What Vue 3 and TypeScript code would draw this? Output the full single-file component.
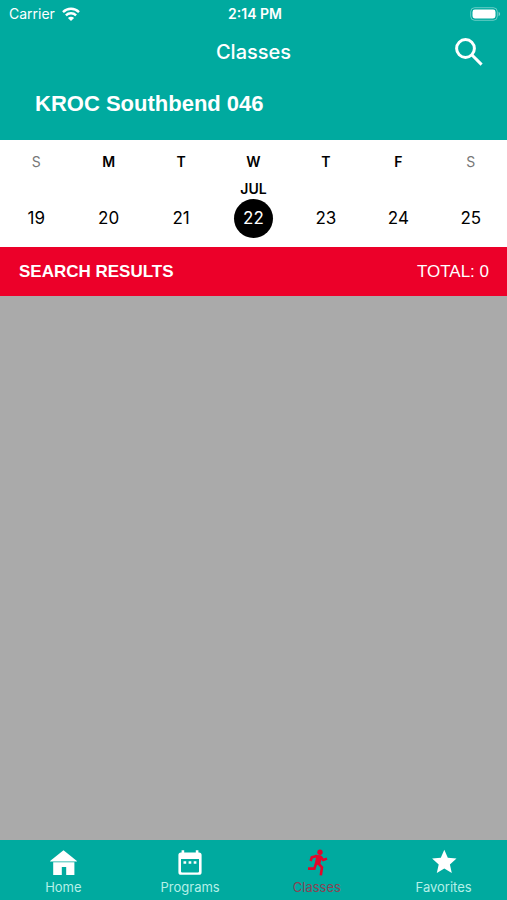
<script setup lang="ts">
import { ref } from 'vue'

interface Day {
  letter: string
  date: number
  weekend: boolean
}

interface Tab {
  label: string
  icon: 'home' | 'calendar' | 'run' | 'star'
}

const days: Day[] = [
  { letter: 'S', date: 19, weekend: true },
  { letter: 'M', date: 20, weekend: false },
  { letter: 'T', date: 21, weekend: false },
  { letter: 'W', date: 22, weekend: false },
  { letter: 'T', date: 23, weekend: false },
  { letter: 'F', date: 24, weekend: false },
  { letter: 'S', date: 25, weekend: true },
]

const tabs: Tab[] = [
  { label: 'Home', icon: 'home' },
  { label: 'Programs', icon: 'calendar' },
  { label: 'Classes', icon: 'run' },
  { label: 'Favorites', icon: 'star' },
]

const selectedDate = ref(22)
const activeTab = ref('Classes')
const total = ref(0)
</script>

<template>
  <div class="screen">
    <header class="header">
      <div class="status">
        <span class="carrier">
          Carrier
          <svg class="wifi" viewBox="0 0 18 14" aria-hidden="true">
            <path d="M1 5.1a11.4 11.4 0 0 1 16 0" />
            <path d="M3.9 8.4a7.2 7.2 0 0 1 10.2 0" />
            <path class="dot" d="M9 14 5.9 11a4.4 4.4 0 0 1 6.2 0z" />
          </svg>
        </span>
        <span class="clock">2:14 PM</span>
        <svg class="battery" viewBox="0 0 31 14" aria-hidden="true">
          <rect class="shell" x="0.7" y="0.7" width="26.6" height="12.6" rx="4" />
          <rect class="charge" x="2.5" y="2.5" width="23" height="9" rx="2.4" />
          <path class="cap" d="M28.6 4.8c2 .8 2 3.6 0 4.4z" />
        </svg>
      </div>
      <div class="nav">
        <h1 class="title">Classes</h1>
        <button class="search" type="button" aria-label="Search">
          <svg viewBox="0 0 28 28" aria-hidden="true">
            <circle cx="10.5" cy="10.5" r="8.9" />
            <path d="M17 17l9.6 9.6" />
          </svg>
        </button>
      </div>
      <h2 class="club">KROC Southbend 046</h2>
    </header>

    <section class="week">
      <button
        v-for="day in days"
        :key="day.date"
        type="button"
        class="day"
        @click="selectedDate = day.date"
      >
        <span class="letter" :class="{ weekend: day.weekend }">{{ day.letter }}</span>
        <span class="month">{{ day.date === selectedDate ? 'JUL' : '' }}</span>
        <span class="date" :class="{ selected: day.date === selectedDate }">{{ day.date }}</span>
      </button>
    </section>

    <div class="results">
      <h3 class="results-title">SEARCH RESULTS</h3>
      <span class="total">TOTAL: {{ total }}</span>
    </div>

    <main class="list"></main>

    <nav class="tabs">
      <a
        v-for="tab in tabs"
        :key="tab.label"
        href="#"
        class="tab"
        :class="{ active: tab.label === activeTab }"
        @click.prevent="activeTab = tab.label"
      >
        <svg v-if="tab.icon === 'home'" class="icon" viewBox="0 0 28 28" aria-hidden="true">
          <path d="M14.5 1.3 27.9 12v.6H1.1V12z" />
          <path d="M4.2 13.2h21.2V26h-8.2v-8h-4.4v8H4.2z" />
        </svg>
        <svg v-else-if="tab.icon === 'calendar'" class="icon" viewBox="0 0 28 28" aria-hidden="true">
          <path
            fill-rule="evenodd"
            d="M5.6 1.2h2.6v2.2h11.6V1.2h2.6v2.2h.6a2.6 2.6 0 0 1 2.6 2.6v17.2a2.6 2.6 0 0 1-2.6 2.6H5a2.6 2.6 0 0 1-2.6-2.6V6A2.6 2.6 0 0 1 5 3.4h.6zM5 10v12.6c0 .5.3.8.8.8h16.4c.5 0 .8-.3.8-.8V10z"
          />
          <path d="M7.5 12.2h2.7v2.6H7.5zM12.6 12.2h2.7v2.6h-2.7zM17.7 12.2h2.7v2.6h-2.7z" />
        </svg>
        <svg v-else-if="tab.icon === 'run'" class="icon" viewBox="0 0 28 28" aria-hidden="true">
          <circle cx="17" cy="3.2" r="2.7" />
          <path d="M12.2 5.8 17.8 6.2 19 8.8 17.3 14.8 16.8 16.2 11.6 15.4 13 8.6z" />
          <path
            class="limb"
            d="M13.6 7 8.8 8.4 7.6 12M17.6 7.6 20.2 11 24 9.6M15.8 14.8 19 18.4 17.8 26.4M13 14.8 11.4 19.6H5"
          />
        </svg>
        <svg v-else class="icon" viewBox="0 0 28 28" aria-hidden="true">
          <path
            d="M14.3.8 17.8 8.8 26.5 9.6 19.9 15.4 21.8 24 14.3 19.5 6.8 24 8.7 15.4 2.1 9.6 10.8 8.8z"
          />
        </svg>
        <span class="label">{{ tab.label }}</span>
      </a>
    </nav>
  </div>
</template>

<style>
body {
  margin: 0;
}
</style>

<style scoped>
.screen {
  display: flex;
  flex-direction: column;
  min-height: 100vh;
  background: #aaaaaa;
  color: #000;
  font-family: Inter, "Liberation Sans", sans-serif;
}

.header {
  padding-bottom: 21px;
  background: #00aa9f;
  color: #fff;
}

.status {
  display: grid;
  grid-template-columns: 1fr auto 1fr;
  align-items: center;
  height: 27px;
  padding: 0 6px 0 9px;
  font-size: 14px;
}

.carrier {
  display: flex;
  align-items: center;
  gap: 7px;
}

.wifi {
  width: 18px;
  height: 14px;
  overflow: visible;
  fill: none;
  stroke: #fff;
  stroke-width: 2.4;
}

.wifi .dot {
  fill: #fff;
  stroke: none;
}

.clock {
  font-weight: 600;
}

.battery {
  justify-self: end;
  width: 31px;
  height: 14px;
}

.shell {
  fill: none;
  stroke: #fff;
  stroke-opacity: 0.4;
}

.charge {
  fill: #fff;
}

.cap {
  fill: #fff;
  fill-opacity: 0.5;
}

.nav {
  display: grid;
  grid-template-columns: 1fr auto 1fr;
  align-items: center;
  height: 50px;
  padding: 0 24px;
}

.title {
  grid-column: 2;
  margin: 0;
  font-size: 20px;
  font-weight: 500;
}

.search {
  display: flex;
  justify-self: end;
  padding: 0;
  border: 0;
  background: none;
  color: inherit;
}

.search svg {
  width: 28px;
  height: 28px;
  fill: none;
  stroke: currentColor;
  stroke-width: 3;
}

.club {
  margin: 12px 35px 0;
  font: bold 22px/30px "Liberation Sans", Arial, sans-serif;
}

.week {
  display: grid;
  grid-template-columns: repeat(7, 1fr);
  padding: 12px 0 9px;
  background: #fff;
}

.day {
  display: flex;
  flex-direction: column;
  align-items: center;
  padding: 0;
  border: 0;
  background: none;
  color: #000;
  font-family: inherit;
}

.letter {
  font-size: 14px;
  font-weight: 600;
  line-height: 20px;
}

.weekend {
  color: #777;
  font-weight: 400;
}

.month {
  height: 20px;
  margin-top: 7px;
  font-size: 14px;
  font-weight: 600;
  line-height: 20px;
}

.date {
  width: 39px;
  height: 39px;
  border-radius: 50%;
  font-size: 17px;
  line-height: 39px;
  text-align: center;
}

.selected {
  background: #000;
  color: #fff;
}

.results {
  display: flex;
  align-items: center;
  justify-content: space-between;
  height: 49px;
  padding: 0 18px 0 19px;
  background: #ec0029;
  color: #fff;
  font-family: "Liberation Sans", Arial, sans-serif;
  font-size: 17px;
}

.results-title {
  margin: 0;
  font-size: 17px;
  font-weight: bold;
}

.list {
  flex: 1;
}

.tabs {
  display: grid;
  grid-template-columns: repeat(4, 1fr);
  height: 60px;
  background: #00aa9f;
}

.tab {
  display: flex;
  flex-direction: column;
  align-items: center;
  padding-top: 9px;
  color: #fff;
  text-decoration: none;
}

.icon {
  width: 28px;
  height: 28px;
  fill: currentColor;
}

.limb {
  fill: none;
  stroke: currentColor;
  stroke-width: 2.6;
}

.label {
  color: #b5f0e8;
  font-size: 13px;
  line-height: 20px;
}

.active {
  color: #e3072b;
}

.active .label {
  color: #8a4455;
}
</style>
